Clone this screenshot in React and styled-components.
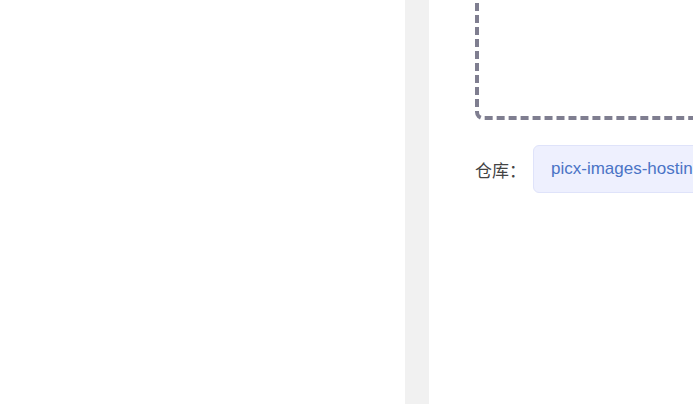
import React from 'react';
import styled, { createGlobalStyle } from 'styled-components';

const GlobalStyle = createGlobalStyle`
  html, body {
    margin: 0;
    padding: 0;
    overflow: hidden;
    background: #fff;
    font-family: "Liberation Sans", "Noto Sans CJK SC", sans-serif;
  }
`;

const App = () => (
  <Layout>
    <GlobalStyle />
    <SidePanel />
    <Divider />
    <Main>
      <UploadArea />
      <RepoRow>
        <Label>仓库：</Label>
        <RepoTag>picx-images-hosting</RepoTag>
      </RepoRow>
    </Main>
  </Layout>
);

const Layout = styled.div`
  display: flex;
  height: 404px;
  width: 100%;
  overflow: hidden;
`;

const SidePanel = styled.aside`
  width: 405px;
  flex-shrink: 0;
  background: #fff;
`;

const Divider = styled.div`
  width: 24px;
  flex-shrink: 0;
  background: #f1f1f1;
`;

const Main = styled.main`
  flex: 1;
  padding-left: 46px;
  min-width: 0;
`;

const UploadArea = styled.div`
  width: 600px;
  height: 300px;
  margin-top: -180px;
  box-sizing: border-box;
  border: 4px dashed #7f7e90;
  border-radius: 8px;
`;

const RepoRow = styled.div`
  display: flex;
  align-items: center;
  margin-top: 25px;
  white-space: nowrap;
`;

const Label = styled.span`
  width: 58px;
  flex-shrink: 0;
  font-size: 17px;
  color: #444;
`;

const RepoTag = styled.div`
  height: 48px;
  box-sizing: border-box;
  display: flex;
  align-items: center;
  padding: 0 17px;
  min-width: 300px;
  background: #eef0fe;
  border: 1px solid #dfe3fa;
  border-radius: 6px;
  color: #4a74c6;
  font-size: 17px;
`;

export default App;
